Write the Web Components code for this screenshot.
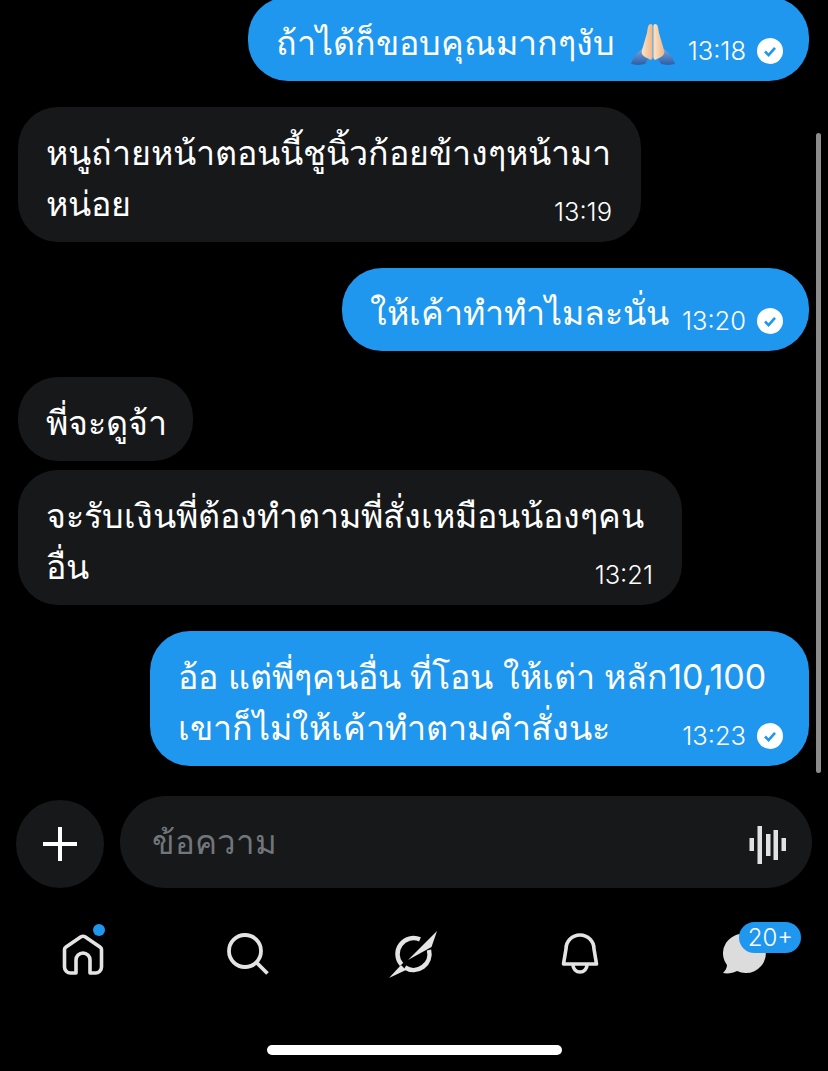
<!DOCTYPE html>
<html>
<head>
<meta charset="utf-8">
<style>
  html, body { margin: 0; background: #000; }
  body { width: 828px; height: 1071px; overflow: hidden; font-family: "Inter", "Noto Sans", "Liberation Sans", sans-serif; }
</style>
</head>
<body>
<chat-screen>
  <chat-bubble mine time="13:18" style="--w:561px">ถ้าได้ก็ขอบคุณมากๆงับ <pray-emoji></pray-emoji></chat-bubble>
  <chat-bubble time="13:19" style="--w:623px">หนูถ่ายหน้าตอนนี้ชูนิ้วก้อยข้างๆหน้ามา<br>หน่อย</chat-bubble>
  <chat-bubble mine time="13:20" style="--w:467px; padding-top:19px">ให้เค้าทำทำไมละนั่น</chat-bubble>
  <chat-bubble tight style="--w:175px">พี่จะดูจ้า</chat-bubble>
  <chat-bubble time="13:21" style="--w:664px">จะรับเงินพี่ต้องทำตามพี่สั่งเหมือนน้องๆคน<br>อื่น</chat-bubble>
  <chat-bubble mine time="13:23" style="--w:659px">อ้อ แต่พี่ๆคนอื่น ที่โอน ให้เต่า หลัก10,100<br>เขาก็ไม่ให้เค้าทำตามคำสั่งนะ</chat-bubble>
</chat-screen>
<chat-composer></chat-composer>
<tab-bar></tab-bar>
<script>
class ChatScreen extends HTMLElement {
    constructor() {
        super()
        this.attachShadow({ mode: 'open' })
        this.shadowRoot.innerHTML = `
            <style>
                :host {
                    display: flex;
                    flex-direction: column;
                    justify-content: flex-end;
                    gap: 26px;
                    height: 796px;
                    box-sizing: border-box;
                    padding: 0 19px 30px 18px;
                    overflow: hidden;
                    position: relative;
                }
                .scroll {
                    position: absolute;
                    right: 7px;
                    top: 133px;
                    width: 5px;
                    height: 640px;
                    background: #8c8c8c;
                    border-radius: 3px;
                }
            </style>
            <slot></slot>
            <div class="scroll"></div>
        `
    }
}

class ChatBubble extends HTMLElement {
    constructor() {
        super()
        this.attachShadow({ mode: 'open' })
        const time = this.getAttribute('time')
        const tick = this.hasAttribute('mine') ? `
            <svg class="tick" width="26" height="26" viewBox="0 0 26 26">
                <circle cx="13" cy="13" r="13" fill="#fff"/>
                <path d="M8 13.5l3.6 3.6L18 9.8" fill="none" stroke="#1f97ee" stroke-width="2.6"/>
            </svg>` : ''
        this.shadowRoot.innerHTML = `
            <style>
                :host {
                    display: block;
                    width: var(--w);
                    box-sizing: border-box;
                    background: #17181a;
                    color: #fff;
                    border-radius: 40px;
                    padding: 20px 0 13px 28px;
                    font-size: 34px;
                    line-height: 51px;
                    white-space: nowrap;
                    flex: none;
                    position: relative;
                }
                :host([mine]) {
                    background: #1f97ee;
                    align-self: flex-end;
                }
                :host([tight]) { margin-bottom: -17px; }
                .meta {
                    position: absolute;
                    right: 29px;
                    bottom: 14px;
                    display: flex;
                    align-items: center;
                    gap: 11px;
                    font-size: 25.5px;
                    line-height: 32px;
                    font-weight: 300;
                }
                :host([mine]) .meta { right: 26px; }
                .tick { display: block; }
            </style>
            <slot></slot>
            ${time ? `<div class="meta"><span>${time}</span>${tick}</div>` : ''}
        `
    }
}

// praying hands, light skin tone
class PrayEmoji extends HTMLElement {
    constructor() {
        super()
        this.attachShadow({ mode: 'open' })
        this.shadowRoot.innerHTML = `
            <style>
                :host { display: inline-block; width: 44px; height: 44px; vertical-align: -8px; margin-left: 6px; position: relative; top: 4px; }
                svg { display: block; }
            </style>
            <svg width="44" height="44" viewBox="0 0 44 44">
                <defs>
                    <linearGradient id="sl" x1="0" y1="0" x2="0" y2="1">
                        <stop offset="0" stop-color="#7aa9e0"/>
                        <stop offset="1" stop-color="#2a5da6"/>
                    </linearGradient>
                    <linearGradient id="sk" x1="0" y1="0" x2="1" y2="0">
                        <stop offset="0" stop-color="#fde3c6"/>
                        <stop offset="1" stop-color="#eab78c"/>
                    </linearGradient>
                </defs>
                <path d="M0 41c2-7 7-13 13-16l5 9-4 7-7 1zM44 41c-2-7-7-13-13-16l-5 9 4 7 7 1z" fill="url(#sl)"/>
                <path d="M20 1c-3 0-3 3-4 9l-5 17c-1 3 0 5 3 7l6 3 1.600-2V3c0-1-.6-2-1.600-2z" fill="url(#sk)"/>
                <path d="M24 1c3 0 3 3 4 9l5 17c1 3 0 5-3 7l-6 3-1.600-2V3c0-1 .6-2 1.600-2z" fill="url(#sk)"/>
            </svg>
        `
    }
}

class ChatComposer extends HTMLElement {
    constructor() {
        super()
        this.attachShadow({ mode: 'open' })
        this.shadowRoot.innerHTML = `
            <style>
                :host {
                    display: flex;
                    align-items: center;
                    gap: 16px;
                    padding: 0 16px;
                    height: 92px;
                }
                .plus {
                    width: 88px;
                    height: 88px;
                    margin-top: 4px;
                    flex: none;
                    border-radius: 50%;
                    background: #17181a;
                    display: flex;
                    align-items: center;
                    justify-content: center;
                }
                .field {
                    flex: 1;
                    height: 92px;
                    border-radius: 46px;
                    background: #17181a;
                    display: flex;
                    align-items: center;
                    justify-content: space-between;
                    padding: 0 25px 0 32px;
                    color: #71767b;
                    font-size: 33px;
                }
                .wave { margin-top: 6px; }
            </style>
            <div class="plus">
                <svg width="34" height="34" viewBox="0 0 34 34"><path d="M17 0v34M0 17h34" stroke="#fff" stroke-width="4"/></svg>
            </div>
            <div class="field">
                <span>ข้อความ</span>
                <svg class="wave" width="38" height="38" viewBox="0 0 38 38" fill="#e2e2e2">
                    <rect x="0.500" y="12" width="4.500" height="13"/>
                    <rect x="8.500" y="0" width="4.500" height="38"/>
                    <rect x="17" y="8" width="4.500" height="22"/>
                    <rect x="24.500" y="4" width="4.500" height="30"/>
                    <rect x="32.500" y="12" width="4.500" height="13"/>
                </svg>
            </div>
        `
    }
}

class TabBar extends HTMLElement {
    constructor() {
        super()
        this.attachShadow({ mode: 'open' })
        this.shadowRoot.innerHTML = `
            <style>
                :host {
                    display: block;
                    height: 183px;
                    position: relative;
                }
                .tabs {
                    display: grid;
                    grid-template-columns: repeat(5, 1fr);
                    padding-top: 36px;
                }
                .tab {
                    height: 60px;
                    display: flex;
                    align-items: center;
                    justify-content: center;
                    position: relative;
                }
                .dot {
                    position: absolute;
                    width: 12px;
                    height: 12px;
                    border-radius: 50%;
                    background: #1f97ee;
                    left: 93px;
                    top: 0;
                }
                .badge {
                    position: absolute;
                    left: 77px;
                    top: -2px;
                    height: 31px;
                    width: 62px;
                    border-radius: 16px;
                    background: #1f97ee;
                    color: #fff;
                    font-size: 24px;
                    font-weight: 300;
                    line-height: 31px;
                    text-align: center;
                }
                .home-bar {
                    position: absolute;
                    left: 267px;
                    top: 157px;
                    width: 295px;
                    height: 10px;
                    border-radius: 5px;
                    background: #fff;
                }
            </style>
            <div class="tabs">
                <div class="tab">
                    <svg width="42" height="41" viewBox="0 0 42 41" fill="none" stroke="#e4e4e4" stroke-width="3.600" stroke-linejoin="round">
                        <path d="M2.500 15.500Q2.500 14 4 13L19 2.800Q21 1.600 23 2.800L38 13Q39.500 14 39.500 15.500V33a6 6 0 0 1-6 6H28V26a7 7 0 0 0-14 0v13H8.500a6 6 0 0 1-6-6z"/>
                    </svg>
                    <span class="dot"></span>
                </div>
                <div class="tab">
                    <svg width="42" height="42" viewBox="0 0 42 42" fill="none" stroke="#e4e4e4" stroke-width="3.800">
                        <circle cx="18" cy="18" r="16"/>
                        <path d="M29.500 29.500l11 11"/>
                    </svg>
                </div>
                <div class="tab">
                    <svg width="50" height="50" viewBox="0 0 50 50" fill="#e4e4e4">
                        <path d="M31 10.400A16 16 0 0 0 12.500 35.600" fill="none" stroke="#e4e4e4" stroke-width="4.500"/>
                        <path d="M16 38.500A16 16 0 0 0 40 21" fill="none" stroke="#e4e4e4" stroke-width="4.500"/>
                        <path d="M48 2L41 9 19 31 42.500 18z"/>
                        <path d="M0 49L12 36 17 41z"/>
                    </svg>
                </div>
                <div class="tab">
                    <svg width="38" height="42" viewBox="0 0 38 42" fill="none" stroke="#e4e4e4" stroke-width="3.600">
                        <path d="M2.500 31L5 16a14 14 0 0 1 28 0l2.500 15z" stroke-linejoin="round"/>
                        <path d="M12 32a7 7 0 0 0 14 0"/>
                    </svg>
                </div>
                <div class="tab">
                    <svg width="44" height="40" viewBox="0 0 44 40" fill="#dcdcdc">
                        <path d="M23 0a20 19.500 0 1 1-9 37C10 39 5 40 0 39c2-2 4-5 4-8A20 19.500 0 0 1 23 0z"/>
                    </svg>
                    <span class="badge">20+</span>
                </div>
            </div>
            <div class="home-bar"></div>
        `
    }
}

customElements.define('chat-screen', ChatScreen)
customElements.define('chat-bubble', ChatBubble)
customElements.define('pray-emoji', PrayEmoji)
customElements.define('chat-composer', ChatComposer)
customElements.define('tab-bar', TabBar)
</script>
</body>
</html>
